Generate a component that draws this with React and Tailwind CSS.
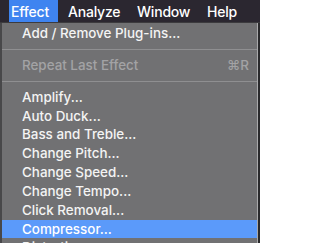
import React from "react";

const items = [
  "Amplify...",
  "Auto Duck...",
  "Bass and Treble...",
  "Change Pitch...",
  "Change Speed...",
  "Change Tempo...",
  "Click Removal...",
  "Compressor...",
  "Distortion...",
];

export default function App() {
  return (
    <div
      className="w-[260px] h-[243px] overflow-hidden bg-[#2a2a2c] flex flex-col"
      style={{ fontFamily: "Inter, 'Liberation Sans', sans-serif" }}
    >
      <div className="h-[22px] shrink-0 bg-[#2b2730] flex items-stretch pl-[9px] text-[14px] tracking-[-0.2px] font-medium text-white">
        <div className="w-[49px] pl-[2px] bg-[#3f84f0] flex items-center">Effect</div>
        <div className="w-[69px] pl-[10px] flex items-center">Analyze</div>
        <div className="w-[70px] pl-[10px] flex items-center">Window</div>
        <div className="pl-[10px] flex items-center">Help</div>
      </div>
      <div className="h-px shrink-0 bg-[#3c3b3e]" />
      <div className="flex flex-1 min-h-0">
        <div className="w-[2px] bg-[#48484a]" />
        <div className="flex-1 bg-[#717173] pt-[1px] text-[13.4px] font-medium text-[#f4f4f4]">
          <div className="h-[18.85px] leading-[18.85px] pl-[20px]">Add / Remove Plug-ins...</div>
          <div className="h-px my-[6px] bg-[#8f8f91]" />
          <div className="h-[18.85px] leading-[18.85px] pl-[20px] pr-[8px] flex justify-between text-[#a3a3a5]">
            <span>Repeat Last Effect</span>
            <span>⌘R</span>
          </div>
          <div className="h-px my-[6px] bg-[#8f8f91]" />
          {items.map((t) =>
            t === "Compressor..." ? (
              <div key={t} className="h-[18.85px] leading-[18.85px] pl-[20px] bg-[#5b9afa] text-white">
                {t}
              </div>
            ) : (
              <div key={t} className="h-[18.85px] leading-[18.85px] pl-[20px]">
                {t}
              </div>
            )
          )}
        </div>
        <div className="w-px bg-[#a9a9ab]" />
        <div className="w-[2px] bg-[#2a2a2c]" />
      </div>
    </div>
  );
}
